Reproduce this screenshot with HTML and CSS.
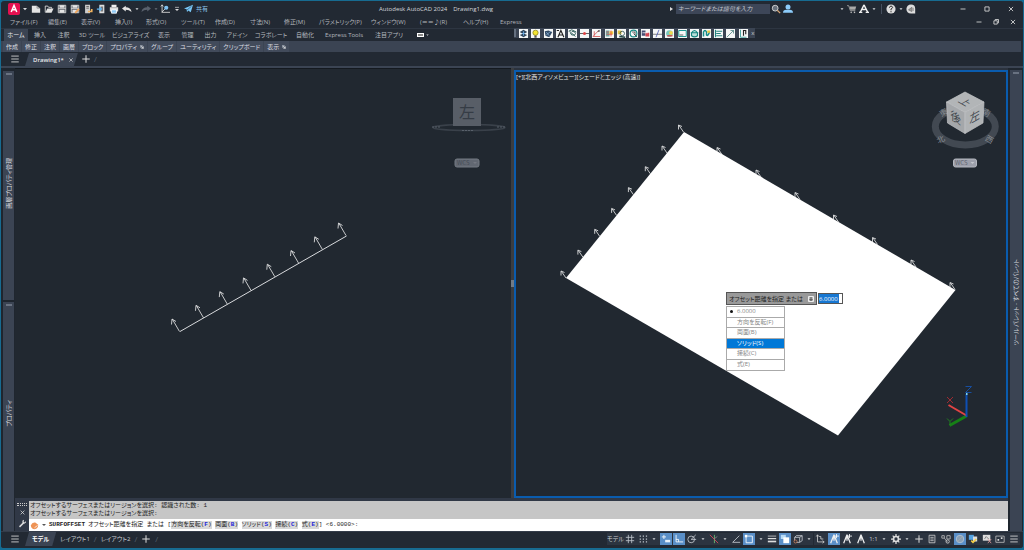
FILE: index.html
```html
<!DOCTYPE html>
<html lang="ja">
<head>
<meta charset="utf-8">
<title>Autodesk AutoCAD 2024 - Drawing1.dwg</title>
<link rel="stylesheet" href="styles.css">
</head>
<body>
<svg class="defs" aria-hidden="true">
  <symbol id="caret" viewBox="0 0 12 12"><path d="M3 4.500h6L6 8z" fill="#d5d8dc"/></symbol>
  <symbol id="corner" viewBox="0 0 6 6"><path d="M0 0h4v4H0z" fill="#8a929e"/><path d="M2 2l3 3M5 2v3H2" stroke="#eee" fill="none"/></symbol>
  <symbol id="new" viewBox="0 0 12 12"><path d="M1 2h6v3h4v5.500H1z" fill="#e4e4e4"/><path d="M7 2l4 3H7z" fill="#aaa"/></symbol>
  <symbol id="open" viewBox="0 0 12 12"><path d="M1.500 10V2.500h3l1 1.500H9v1.500" fill="none" stroke="#e4e4e4"/><path d="M1.500 10.500l2.500-5h7.500l-2.500 5z" fill="#e4e4e4"/></symbol>
  <symbol id="save" viewBox="0 0 12 12"><path d="M1.500 1.500h9v9h-9z" fill="#555b64" stroke="#ddd"/><path d="M3 1.500h6v3H3zM3 7h6v3.500H3z" fill="#e4e4e4"/><path d="M1.500 5.500h9" stroke="#ddd"/></symbol>
  <symbol id="pencil" viewBox="0 0 12 12"><path d="M5.500 10l4.500-5 1.500 1.500-4.500 5z" fill="#f2a65a"/></symbol>
  <symbol id="pagearrow" viewBox="0 0 12 12"><path d="M2.500 1h6v10h-6z" fill="#ccc"/><path d="M4 3h3M4 5h3" stroke="#555"/><path d="M6 9h4.500v-3" fill="none" stroke="#f2b35e" stroke-width="2"/></symbol>
  <symbol id="pageblue" viewBox="0 0 12 12"><path d="M4 1h6v10H4z" fill="#ddd"/><path d="M5.500 3v6h3V3z" fill="#777"/><path d="M1 6h5M4 3.500L6.500 6 4 8.500" stroke="#62b5ef" fill="none" stroke-width="1.500"/></symbol>
  <symbol id="print" viewBox="0 0 12 12"><path d="M3 1h6v3H3z" fill="#eee"/><path d="M1 4h10v5H1z" fill="#ddd"/><path d="M3 7h6v4H3z" fill="#8fc9f5" stroke="#fff"/></symbol>
  <symbol id="undo" viewBox="0 0 12 12"><path d="M0 5.500L4.500 2v2q6 0 7 5.500Q8.500 7 4.500 7v2z" fill="#e4e4e4"/></symbol>
  <symbol id="redo" viewBox="0 0 12 12"><path d="M12 5.500L7.500 2v2q-6 0-7 5.500Q3.500 7 7.500 7v2z" fill="#59616d"/></symbol>
  <symbol id="axis" viewBox="0 0 12 12"><path d="M2.500 1v9H12M1 3l1.500-2L4 3M2 10l5-5" fill="none" stroke="#ddd"/><circle cx="7.500" cy="4.500" r="2.500" fill="#7fc1f2"/></symbol>
  <symbol id="more" viewBox="0 0 12 12"><path d="M3 3.500h6" stroke="#ddd"/><path d="M3 6h6L6 9z" fill="#ddd"/></symbol>
  <symbol id="plane" viewBox="0 0 12 12"><path d="M0 6l12-5-3 10-3.500-2.500L4 11 3.500 7z" fill="#78c5f5"/><path d="M4 8l6-5" stroke="#315c7a"/></symbol>
  <symbol id="search" viewBox="0 0 12 12"><circle cx="5" cy="5" r="3.500" fill="#68717c" stroke="#ddd"/><path d="M7.500 7.500L11 11" stroke="#d7a676" stroke-width="1.500"/></symbol>
  <symbol id="user" viewBox="0 0 12 12"><circle cx="6" cy="3.500" r="3" fill="#8ccbfa"/><path d="M0 10.500q0-3.500 4-3.500h4q4 0 4 3.500z" fill="#8ccbfa"/></symbol>
  <symbol id="cart" viewBox="0 0 12 12"><path d="M0 2h2l2 6h6" stroke="#aaa" fill="none"/><path d="M3 3h8l-1 4H4z" fill="#aaa"/><circle cx="5" cy="10" r="1" fill="#bbb"/><circle cx="9" cy="10" r="1" fill="#bbb"/></symbol>
  <symbol id="store" viewBox="0 0 12 12"><path d="M6 1L1.500 10M6 1l4.500 9M4 6.500h4" stroke="#eee" stroke-width="1.700" fill="none"/><path d="M0 10h4M8 10h4" stroke="#eee" stroke-width="1.500"/></symbol>
  <symbol id="helpdisc" viewBox="0 0 12 12"><circle cx="6" cy="6" r="5.500" fill="#ddd"/><path d="M4 4.500q.5-2 2-2t2 1.500q0 1-2 2V7.500M6 8.500V10" stroke="#333" fill="none" stroke-width="1.200"/></symbol>
  <symbol id="notice" viewBox="0 0 12 12"><path d="M6 .5q5 0 5 5v6H6Q.5 11 .5 6 1 .5 6 .5" fill="#ddd"/><path d="M3 7l4-3v5zM8.500 4.500v4" stroke="#777" fill="#999"/></symbol>
  <symbol id="min" viewBox="0 0 12 12"><path d="M3 6h6" stroke="#ddd"/></symbol>
  <symbol id="max" viewBox="0 0 12 12"><path d="M3.500 3.500h5v5h-5z" stroke="#ddd" fill="none"/></symbol>
  <symbol id="restore" viewBox="0 0 12 12"><path d="M3.500 4.500h4v4h-4zM5 4V3h4v4H8" stroke="#ddd" fill="none"/></symbol>
  <symbol id="close" viewBox="0 0 12 12"><path d="M3.500 3.500l5 5M8.500 3.500l-5 5" stroke="#ddd"/></symbol>
  <symbol id="burger" viewBox="0 0 12 12"><path d="M1.500 2.500h9M1.500 6h9M1.500 9.500h9" stroke="#ddd"/></symbol>
  <symbol id="plus" viewBox="0 0 12 12"><path d="M6 1.500v9M1.500 6h9" stroke="#ddd" stroke-width="1.200"/></symbol>
  <symbol id="wrench" viewBox="0 0 12 12"><path d="M2 10.500l6-6" stroke="#ddd" stroke-width="2"/><path d="M10.500 2.500A2.500 2.500 0 1 1 8 1L7.500 4l1.500.5z" fill="#ddd"/></symbol>
  <symbol id="surf" viewBox="0 0 12 12"><path d="M1 6q2-5 6-4l4 3q0 5-5 6-4 0-5-5" fill="#ee9355"/><path d="M6 9l4-3" stroke="#fff"/></symbol>
  <symbol id="down" viewBox="0 0 6 6"><path d="M.5.500h5v5h-5z" fill="#bbb" stroke="#eee"/><path d="M3 1v3.500M1.500 3L3 4.500 4.500 3" stroke="#222" stroke-width=".7" fill="none"/></symbol>
  <!-- floating toolbar -->
  <symbol id="layer1" viewBox="0 0 12 12"><path d="M1 4l5-3 5 3-5 3zM1 8l5-2 5 2-5 3z" fill="#30465c"/><path d="M6 3v6M4 6h4" stroke="#76b7ef"/></symbol>
  <symbol id="bulb" viewBox="0 0 12 12"><circle cx="6" cy="5" r="3.500" fill="#f3e431" stroke="#88811b"/><path d="M4.500 8.500h3v3h-3z" fill="#555"/></symbol>
  <symbol id="layer2" viewBox="0 0 12 12"><path d="M1 3l5-1 5 2-4 7-5-2z" fill="#304a66"/><path d="M3 8l6-5M3 4l4 5" stroke="#8cb4d9"/></symbol>
  <symbol id="texta" viewBox="0 0 12 12"><path d="M2.500 11L6.500 2 10.500 11M4 8h5M1 2h3" stroke="#222" stroke-width="1.500" fill="none"/></symbol>
  <symbol id="shape1" viewBox="0 0 12 12"><path d="M1 3l4-2 6 3M2 3l8 7M5 3q5 0 5 3T5 8L3 5" fill="none" stroke="#35635f" stroke-width="1.300"/></symbol>
  <symbol id="redline" viewBox="0 0 12 12"><path d="M0 6h12" stroke="#333"/><circle cx="6" cy="6" r="2" fill="#e04545"/></symbol>
  <symbol id="redangle" viewBox="0 0 12 12"><path d="M2 9L9 2M1 10h10M3 3v6" stroke="#c44" fill="none"/><path d="M7 3l3-2v3z" fill="#333"/></symbol>
  <symbol id="hatch" viewBox="0 0 12 12"><path d="M1 2h5v8H1z" fill="#71aaa5"/><path d="M6 3h5v4H6z" fill="#f3d13d"/><path d="M2 4h3M2 7h8M8 2v8" stroke="#d44"/></symbol>
  <symbol id="shape2" viewBox="0 0 12 12"><path d="M1 2h5v5H1z" fill="#e0c64b"/><circle cx="7" cy="6" r="3" fill="none" stroke="#244"/><path d="M3 10L11 11" stroke="#244" stroke-width="2"/></symbol>
  <symbol id="ring" viewBox="0 0 12 12"><circle cx="6" cy="6" r="4.500" fill="none" stroke="#1b8b86" stroke-width="1.500"/><path d="M6 6l5 5M4 4h4v4" stroke="#333" fill="none"/></symbol>
  <symbol id="blocks" viewBox="0 0 12 12"><path d="M1 2h5v7H1z" fill="#464c73"/><path d="M6 5h5v5H6z" fill="#d44552"/><path d="M2 5h7" stroke="#fff"/></symbol>
  <symbol id="trim" viewBox="0 0 12 12"><path d="M0 7h12" stroke="#555"/><path d="M8 1L4 11" stroke="#3d4fb0"/></symbol>
  <symbol id="palette" viewBox="0 0 12 12"><circle cx="6" cy="6" r="4.500" fill="#78c8bd"/><circle cx="8" cy="5" r="2.500" fill="#f1d94c"/><path d="M3 9h7" stroke="#c55" stroke-width="2"/></symbol>
  <symbol id="rect" viewBox="0 0 12 12"><path d="M1 2h10v8H1z" fill="none" stroke="#1b9690" stroke-width="1.300"/><path d="M2 8h5" stroke="#333"/></symbol>
  <symbol id="cyl" viewBox="0 0 12 12"><path d="M1 5h10M2 5q4-6 8 0v4q-4 3-8 0z" stroke="#148581" stroke-width="1.500" fill="#b9deda"/></symbol>
  <symbol id="wave" viewBox="0 0 12 12"><path d="M2 10V4q2-4 4 0v4q2 2 4-4" stroke="#168c87" stroke-width="2" fill="none"/><path d="M7 2h4v3H7z" fill="#e7c83e"/></symbol>
  <symbol id="align" viewBox="0 0 12 12"><path d="M2 1v10M3 3h8M3 6h6M3 9h8" stroke="#23827e" stroke-width="1.500"/></symbol>
  <symbol id="diag" viewBox="0 0 12 12"><path d="M1 11L10 2M6 2h4v4" stroke="#427b79" fill="none"/></symbol>
  <symbol id="note" viewBox="0 0 12 12"><path d="M2 1v10M2 11h8" stroke="#188b86"/><path d="M6 9V2h3v5" stroke="#222" stroke-width="1.500" fill="none"/></symbol>
  <!-- status bar -->
  <symbol id="grid" viewBox="0 0 12 12"><path d="M4 1v10M8 1v10M1 4h10M1 8h10" stroke="#bfc5cc"/></symbol>
  <symbol id="dots" viewBox="0 0 12 12"><path d="M2 2.500h9M2 6h9M2 9.500h9" stroke="#bfc5cc" stroke-width="1.500" stroke-dasharray="1.500 2.200"/></symbol>
  <symbol id="dyn" viewBox="0 0 12 12"><path d="M3.500 1v5M1 3.500h5" stroke="#fff"/><path d="M5 7h6v3H5z" fill="#e8f1fa"/></symbol>
  <symbol id="ortho" viewBox="0 0 12 12"><path d="M2.500 1v8.500H11M2.500 6.500h3v3" stroke="#fff" fill="none"/></symbol>
  <symbol id="polar" viewBox="0 0 12 12"><circle cx="5" cy="6.500" r="4" stroke="#c5cad0" fill="none"/><path d="M5 6.500L10.500 1M5 6.500h6" stroke="#c5cad0"/></symbol>
  <symbol id="iso" viewBox="0 0 12 12"><path d="M6.500 1v10" stroke="#6fc07a"/><path d="M1 1l10 10" stroke="#e04b5a"/><path d="M6 6l4-3" stroke="#888"/></symbol>
  <symbol id="angle" viewBox="0 0 12 12"><path d="M10 2L2 10h9" stroke="#c5cad0" fill="none"/></symbol>
  <symbol id="osnap" viewBox="0 0 12 12"><path d="M2.500 3v7.500H10V2.500H4" stroke="#fff" fill="none"/><path d="M1 1h3v3H1z" fill="#fff"/></symbol>
  <symbol id="weights" viewBox="0 0 12 12"><path d="M1 2.500h10" stroke="#ccc"/><path d="M1 5.500h10" stroke="#ddd" stroke-width="1.500"/><path d="M1 9h10" stroke="#ddd" stroke-width="2"/></symbol>
  <symbol id="cycle" viewBox="0 0 12 12"><path d="M1 1h6v5H1z" fill="#b9dbf5"/><path d="M4 4h7v7H4z" fill="#fff"/></symbol>
  <symbol id="cube" viewBox="0 0 12 12"><path d="M4 2h7v6l-3 2H2V4l2-2M2 4h6v6M8 4l3-2" stroke="#c5cad0" fill="none"/><circle cx="3" cy="9" r="1.800" fill="#25303c" stroke="#c77a55"/></symbol>
  <symbol id="ucs" viewBox="0 0 12 12"><path d="M3 1v8.500h8M1.500 3L3 1l1.500 2M9 8l2 1.500L9 11M5 3h2v3h3" stroke="#ccc" fill="none"/></symbol>
  <symbol id="anno" viewBox="0 0 12 12"><path d="M6 1L2 11M6 1l4 10M6 2v6" stroke="#eee" fill="none" stroke-width="1.500"/></symbol>
  <symbol id="spark" viewBox="0 0 12 12"><path d="M9 0v5M7 2.500h5" stroke="#fff"/></symbol>
  <symbol id="gear" viewBox="0 0 12 12"><circle cx="6" cy="6" r="3" fill="none" stroke="#ddd" stroke-width="2"/><path d="M6 0v2.500M6 9.500V12M0 6h2.500M9.500 6H12M2 2l1.500 1.500M10 2L8.500 3.500M2 10l1.500-1.500M10 10L8.500 8.500" stroke="#ddd" stroke-width="1.500"/></symbol>
  <symbol id="list" viewBox="0 0 12 12"><path d="M2.500 1.500h7v9h-7zM4 4h4M4 6h4M4 8h4" stroke="#ccc" fill="none"/></symbol>
  <symbol id="links" viewBox="0 0 12 12"><path d="M1 2h3v3H1zM7 2h4v4H7z" stroke="#bbb" fill="none"/><path d="M4 5l4 5" stroke="#bbb"/><circle cx="8" cy="9" r="2" stroke="#ccc" fill="none"/></symbol>
  <symbol id="isolate" viewBox="0 0 12 12"><circle cx="6" cy="6" r="4.500" fill="#8aa0b6" stroke="#b7c6d5"/><path d="M3 9l6-6" stroke="#aaa"/></symbol>
  <symbol id="perf" viewBox="0 0 12 12"><path d="M1 1h6v6H1z" fill="#54a3e2"/><path d="M6 3h5v6H6z" fill="#ddd"/><path d="M4 8l2 2 4-4" stroke="#f1cc44" stroke-width="2" fill="none"/></symbol>
  <symbol id="image" viewBox="0 0 12 12"><path d="M1 1h9v7H1z" fill="#ddd"/><path d="M3 6l2-3 3 3" stroke="#777" fill="none"/><path d="M7 6l4 5M11 6l-4 5" stroke="#e2a0a0"/></symbol>
  <symbol id="screen" viewBox="0 0 12 12"><path d="M1 2.500h10v7.500H1z" stroke="#bbb" fill="none"/><path d="M3 6h2v2H3zM7 4h2v2H7z" fill="#ddd"/></symbol>
  <symbol id="arrow" viewBox="0 0 12 16" overflow="visible"><path d="M8 12.500L1 .5M0 5.500L.5 0 4.500 2.500" stroke="#f1f1f1" fill="none" stroke-width=".8"/></symbol>
  <symbol id="arrow-s" viewBox="0 0 12 12" overflow="visible"><path d="M5 7L.5 .5M0 4.500V0L3.500 1.500" stroke="#f1f1f1" fill="none" stroke-width=".8"/></symbol>
</svg>

<div class="window">
  <header class="titlebar">
    <div class="quick">
      <button class="logo" aria-label="アプリケーション メニュー"><svg viewBox="0 0 12 12"><path d="M3.200 9L6 2.500 8.800 9M4 6.800h4" stroke="#fff" stroke-width="1.500" fill="none"/></svg></button>
      <button class="icon" aria-label="メニューを開く"><svg><use href="#caret"/></svg></button>
      <div class="quick-tools">
        <button class="icon" aria-label="新規"><svg><use href="#new"/></svg></button>
        <button class="icon" aria-label="開く"><svg><use href="#open"/></svg></button>
        <button class="icon" aria-label="保存"><svg><use href="#save"/></svg></button>
        <button class="icon" aria-label="名前を付けて保存"><svg><use href="#save"/><use href="#pencil"/></svg></button>
        <button class="icon" aria-label="Web から開く"><svg><use href="#pagearrow"/></svg></button>
        <button class="icon" aria-label="Web に保存"><svg><use href="#pageblue"/></svg></button>
        <button class="icon" aria-label="印刷"><svg><use href="#print"/></svg></button>
        <button class="icon" aria-label="元に戻す"><svg><use href="#undo"/></svg></button>
      </div>
      <button class="caret" aria-label="元に戻す履歴"><svg><use href="#caret"/></svg></button>
      <button class="icon" aria-label="やり直し"><svg><use href="#redo"/></svg></button>
      <button class="caret dim" aria-label="やり直し履歴"><svg><use href="#caret"/></svg></button>
      <button class="icon" aria-label="UCS"><svg><use href="#axis"/></svg></button>
      <button class="caret more" aria-label="カスタマイズ"><svg><use href="#more"/></svg></button>
      <button class="share"><svg><use href="#plane"/></svg>共有</button>
    </div>
    <div class="title"><span>Autodesk AutoCAD 2024</span><span>Drawing1.dwg</span></div>
    <div class="infocenter">
      <button class="next" aria-label="検索を折りたたむ"><svg viewBox="0 0 4 6"><path d="M0 1l3 2-3 2z" fill="#ddd"/></svg></button>
      <input class="search" type="text" aria-label="検索" placeholder="キーワードまたは語句を入力">
      <button class="icon" aria-label="検索実行"><svg><use href="#search"/></svg></button>
      <button class="icon" aria-label="サインイン"><svg><use href="#user"/></svg></button>
      <button class="caret account" aria-label="アカウント"><svg><use href="#caret"/></svg></button>
      <button class="icon" aria-label="カート"><svg><use href="#cart"/></svg></button>
      <button class="icon" aria-label="App Store"><svg><use href="#store"/></svg></button>
      <button class="caret" aria-label="App Store メニュー"><svg><use href="#caret"/></svg></button>
      <i class="rule"></i>
      <button class="icon" aria-label="ヘルプ"><svg><use href="#helpdisc"/></svg></button>
      <button class="caret" aria-label="ヘルプ メニュー"><svg><use href="#caret"/></svg></button>
      <button class="icon" aria-label="通知"><svg><use href="#notice"/></svg></button>
      <div class="sys">
        <button class="icon" aria-label="最小化"><svg><use href="#min"/></svg></button>
        <button class="icon" aria-label="最大化"><svg><use href="#max"/></svg></button>
        <button class="icon" aria-label="閉じる"><svg><use href="#close"/></svg></button>
      </div>
    </div>
  </header>

  <nav class="menubar">
    <div class="menus">
      <button>ファイル(F)</button><button>編集(E)</button><button>表示(V)</button><button>挿入(I)</button><button>形式(O)</button><button>ツール(T)</button><button>作成(D)</button><button>寸法(N)</button><button>修正(M)</button><button>パラメトリック(P)</button><button>ウィンドウ(W)</button><button>(＝＝♪(R)</button><button>ヘルプ(H)</button><button>Express</button>
    </div>
    <div class="doc-sys">
      <button class="icon" aria-label="図面を最小化"><svg><use href="#min"/></svg></button>
      <button class="icon" aria-label="図面を元に戻す"><svg><use href="#restore"/></svg></button>
      <button class="icon" aria-label="図面を閉じる"><svg><use href="#close"/></svg></button>
    </div>
  </nav>

  <nav class="ribbon-tabs">
    <button class="active">ホーム</button><button>挿入</button><button>注釈</button><button>3D ツール</button><button>ビジュアライズ</button><button>表示</button><button>管理</button><button>出力</button><button>アドイン</button><button>コラボレート</button><button>自動化</button><button>Express Tools</button><button>注目アプリ</button>
    <button class="ribbon-toggle" aria-label="リボンを最小化"><i></i><svg><use href="#caret"/></svg></button>
  </nav>

  <div class="panels">
    <button>作成</button><button>修正</button><button>注釈</button><button>画層</button><button>ブロック</button><button>プロパティ<svg><use href="#corner"/></svg></button><button>グループ</button><button>ユーティリティ</button><button>クリップボード</button><button>表示<svg><use href="#corner"/></svg></button>
  </div>

  <div class="toolbar">
    <i class="grip"></i>
    <button aria-label="画層プロパティ"><svg><use href="#layer1"/></svg></button><button aria-label="表示"><svg><use href="#bulb"/></svg></button><button aria-label="画層"><svg><use href="#layer2"/></svg></button><button aria-label="文字"><svg><use href="#texta"/></svg></button><button aria-label="スプライン"><svg><use href="#shape1"/></svg></button><button aria-label="点"><svg><use href="#redline"/></svg></button><button aria-label="計測"><svg><use href="#redangle"/></svg></button><button aria-label="ハッチング"><svg><use href="#hatch"/></svg></button><button aria-label="結合"><svg><use href="#shape2"/></svg></button><button aria-label="円"><svg><use href="#ring"/></svg></button><button aria-label="ブロック"><svg><use href="#blocks"/></svg></button><button aria-label="トリム"><svg><use href="#trim"/></svg></button><button aria-label="色"><svg><use href="#palette"/></svg></button><button aria-label="長方形"><svg><use href="#rect"/></svg></button><button aria-label="円柱"><svg><use href="#cyl"/></svg></button><button aria-label="サーフェス"><svg><use href="#wave"/></svg></button><button aria-label="位置合わせ"><svg><use href="#align"/></svg></button><button aria-label="線分"><svg><use href="#diag"/></svg></button><button aria-label="注記"><svg><use href="#note"/></svg></button>
    <button class="toolbar-close" aria-label="ツールバーを閉じる">x</button>
  </div>

  <nav class="file-tabs">
    <button class="burger" aria-label="図面タブ メニュー"><svg><use href="#burger"/></svg></button>
    <button class="file-tab">Drawing1*<svg><use href="#close"/></svg></button>
    <button class="icon add" aria-label="新しい図面"><svg><use href="#plus"/></svg></button>
    <span class="slash">/</span>
  </nav>

  <main class="workspace">
    <aside class="side left">
      <section class="palette"><i></i><span>画層プロパティ管理</span></section>
      <section class="palette lower"><i></i><span>プロパティ</span></section>
    </aside>
    <div class="center">
      <div class="views">
        <section class="view" aria-label="左ビュー">
          <svg class="drawing"><g transform="translate(-15 -69)">
            <path d="M180 331.500L346.500 236" stroke="#d8dadd" fill="none"/>
            <use href="#arrow" x="171.500" y="319" width="12" height="16"/><use href="#arrow" x="195.500" y="305.300" width="12" height="16"/><use href="#arrow" x="219.300" y="291.600" width="12" height="16"/><use href="#arrow" x="243" y="277.900" width="12" height="16"/><use href="#arrow" x="266.800" y="264.200" width="12" height="16"/><use href="#arrow" x="290.500" y="250.500" width="12" height="16"/><use href="#arrow" x="314.300" y="236.800" width="12" height="16"/><use href="#arrow" x="338" y="223" width="12" height="16"/>
            <ellipse cx="469" cy="127.500" rx="36" ry="3" fill="none" stroke="#3a414a" stroke-width="1.500"/>
            <path d="M432 127h8M497 127h8M462 130.500h12" stroke="#59616b" stroke-dasharray="2 1"/>
            <path d="M453 98h28v28h-28z" fill="#585e67"/>
            <text class="cube-left" x="467" y="118">左</text>
            <rect x="455" y="159" width="24" height="8" rx="2" fill="#626872" stroke="#747a83"/>
            <text class="wcs dark" x="457" y="165">WCS</text><path d="M473 162h4l-2 2z" fill="#747982"/>
          </g></svg>
        </section>
        <div class="splitter"><i></i></div>
        <section class="view active" aria-label="北西アイソメビュー">
          <svg class="drawing"><g transform="translate(-516 -72)">
            <path d="M566 278L684 132 955.500 290 838 435.500z" fill="#fff"/>
            <use href="#arrow-s" x="561" y="271" width="12" height="12"/><use href="#arrow-s" x="577.900" y="250.100" width="12" height="12"/><use href="#arrow-s" x="594.700" y="229.300" width="12" height="12"/><use href="#arrow-s" x="611.600" y="208.400" width="12" height="12"/><use href="#arrow-s" x="628.400" y="187.600" width="12" height="12"/><use href="#arrow-s" x="645.300" y="166.700" width="12" height="12"/><use href="#arrow-s" x="662" y="146" width="12" height="12"/><use href="#arrow-s" x="678.500" y="125" width="12" height="12"/>
            <use href="#arrow-s" x="717" y="147.500" width="12" height="12"/><use href="#arrow-s" x="756" y="170" width="12" height="12"/><use href="#arrow-s" x="795" y="192.500" width="12" height="12"/><use href="#arrow-s" x="833.500" y="215" width="12" height="12"/><use href="#arrow-s" x="872.500" y="237.500" width="12" height="12"/><use href="#arrow-s" x="911" y="260" width="12" height="12"/><use href="#arrow-s" x="950" y="282.500" width="12" height="12"/>
            <ellipse cx="965.300" cy="126.500" rx="30" ry="18.500" fill="none" stroke="#424952" stroke-width="7"/>
            <g class="compass"><text transform="translate(942 142) rotate(-25)">北</text><text transform="translate(988 142) rotate(30)">西</text><text transform="translate(945 115) rotate(-30)">東</text><text transform="translate(985 115) rotate(30)">南</text></g>
            <path d="M965 92l19 10-19 10.500L946.500 102z" fill="#b2b5b7" stroke="#c6c8ca" stroke-width=".7"/>
            <path d="M946.500 102l18.500 10.500v21L947.500 123z" fill="#a4a7aa" stroke="#c0c2c4" stroke-width=".7"/>
            <path d="M984 102l-19 10.500v21L983 123z" fill="#b0b3b5" stroke="#c0c2c4" stroke-width=".7"/>
            <g class="cube-text"><text class="top" transform="matrix(.87 .5 -.87 .5 957.500 101.500)">上</text><text transform="matrix(.87 .5 0 1 950.500 119)">後</text><text transform="matrix(.87 -.5 0 1 969.500 124)">左</text></g>
            <rect x="953.500" y="159" width="23" height="8" rx="2" fill="#9da0ab" stroke="#b5b8c0"/>
            <text class="wcs" x="955" y="165">WCS</text><path d="M970.500 162h4l-2 2z" fill="#c4c7cd"/>
            <path d="M966.500 416L949.500 425.500" stroke="#168016" stroke-width="3"/><path d="M966.500 415.500L948.500 405" stroke="#e24444" stroke-width="2"/><path d="M966.500 417V394" stroke="#0e4fb4" stroke-width="2"/>
            <path d="M966 394h1.500" stroke="#7ed6ee" stroke-width="2"/>
            <path d="M947 397l6 6M953 397l-6 6" stroke="#9e2b32"/><path d="M947 418.500l3 3 3-3M950 421.500v3.500" stroke="#218121" fill="none"/><path d="M965.500 386.500h6l-6 6h6" stroke="#174ea0" fill="none"/>
          </g></svg>
          <div class="view-label">[+][北西アイソメビュー][シェードとエッジ (高速)]</div>
          <form class="dynamic">
            <div class="prompt-row">
              <label for="distance">オフセット距離を指定 または<svg><use href="#down"/></svg></label>
              <input id="distance" type="text" value="6.0000">
            </div>
            <div class="options">
              <button type="button" class="current">6.0000</button><button type="button">方向を反転(F)</button><button type="button">両面(B)</button><button type="button" class="chosen">ソリッド(S)</button><button type="button">接続(C)</button><button type="button">式(E)</button>
            </div>
          </form>
        </section>
      </div>
      <section class="command">
        <div class="command-tools">
          <i class="dots"></i>
          <button aria-label="コマンド ウィンドウを閉じる"><svg><use href="#close"/></svg></button>
          <button aria-label="カスタマイズ"><svg><use href="#wrench"/></svg></button>
        </div>
        <div class="console">
          <div class="history"><p>オフセットするサーフェスまたはリージョンを選択: 認識された数: 1</p><p>オフセットするサーフェスまたはリージョンを選択:</p></div>
          <div class="entry"><svg class="surf"><use href="#surf"/></svg><span class="tri"></span><b>SURFOFFSET</b><span>オフセット距離を指定 または [<button>方向を反転(<em>F</em>)</button> <button>両面(<em>B</em>)</button> <button>ソリッド(<em>S</em>)</button> <button>接続(<em>C</em>)</button> <button>式(<em>E</em>)</button>] &lt;6.0000&gt;:</span></div>
        </div>
      </section>
    </div>
    <aside class="side right"><section class="palette"><i></i><span>ツール パレット - すべてのパレット</span></section></aside>
  </main>

  <footer class="status">
    <nav class="layouts">
      <button class="burger" aria-label="レイアウト メニュー"><svg><use href="#burger"/></svg></button>
      <button class="layout-tab active">モデル</button><button class="layout-tab">レイアウト1</button><span class="slash">/</span><button class="layout-tab">レイアウト2</button><span class="slash">/</span>
      <button class="icon add" aria-label="新しいレイアウト"><svg><use href="#plus"/></svg></button><span class="slash">/</span>
    </nav>
    <div class="toggles">
      <div class="toggle-group">
        <button class="model">モデル</button>
        <button class="icon" aria-label="グリッド"><svg><use href="#grid"/></svg></button><button class="icon" aria-label="スナップ"><svg><use href="#dots"/></svg></button><button class="caret" aria-label="スナップ設定"><svg><use href="#caret"/></svg></button><button class="icon on" aria-label="ダイナミック入力"><svg><use href="#dyn"/></svg></button><button class="icon on" aria-label="直交モード"><svg><use href="#ortho"/></svg></button><button class="icon" aria-label="極トラッキング"><svg><use href="#polar"/></svg></button><button class="caret" aria-label="極設定"><svg><use href="#caret"/></svg></button><button class="icon" aria-label="アイソメ"><svg><use href="#iso"/></svg></button><button class="caret" aria-label="アイソメ設定"><svg><use href="#caret"/></svg></button><button class="icon" aria-label="トラッキング"><svg><use href="#angle"/></svg></button><button class="icon on" aria-label="オブジェクト スナップ"><svg><use href="#osnap"/></svg></button><button class="caret" aria-label="スナップ一覧"><svg><use href="#caret"/></svg></button><button class="icon" aria-label="線の太さ"><svg><use href="#weights"/></svg></button><button class="icon on" aria-label="選択の循環"><svg><use href="#cycle"/></svg></button><button class="icon" aria-label="3D スナップ"><svg><use href="#cube"/></svg></button><button class="caret" aria-label="3D スナップ設定"><svg><use href="#caret"/></svg></button>
      </div>
      <div class="toggle-group">
        <button class="icon" aria-label="ダイナミック UCS"><svg><use href="#ucs"/></svg></button><button class="icon on" aria-label="注釈の表示"><svg><use href="#anno"/><use href="#spark"/></svg></button><button class="icon" aria-label="自動尺度"><svg><use href="#anno"/><use href="#spark"/></svg></button><button class="icon" aria-label="注釈尺度"><svg><use href="#anno"/></svg></button><button class="scale">1:1</button><button class="caret" aria-label="尺度一覧"><svg><use href="#caret"/></svg></button><button class="icon" aria-label="ワークスペース"><svg><use href="#gear"/></svg></button><button class="caret" aria-label="ワークスペース一覧"><svg><use href="#caret"/></svg></button><button class="icon" aria-label="注釈モニター"><svg><use href="#plus"/></svg></button><button class="icon" aria-label="クイック プロパティ"><svg><use href="#list"/></svg></button><button class="icon" aria-label="UI ロック"><svg><use href="#links"/></svg></button><button class="icon on" aria-label="選択表示"><svg><use href="#isolate"/></svg></button><button class="icon" aria-label="パフォーマンス"><svg><use href="#perf"/></svg></button><button class="icon" aria-label="画像"><svg><use href="#image"/></svg></button><button class="icon" aria-label="フルスクリーン"><svg><use href="#screen"/></svg></button><button class="icon" aria-label="ステータス メニュー"><svg><use href="#burger"/></svg></button>
      </div>
    </div>
  </footer>
</div>
</body>
</html>
```

FILE: styles.css
```css
:root {
  --bg: #222933;
  --canvas: #212830;
  --bar: #3b4453;
  --text: #c9cdd2;
  --accent: #0a5cae;
}
* { box-sizing: border-box; }
body {
  margin: 0;
  background: #0d6f9c;
  color: var(--text);
  font: 7px/10px "Open Sans", "Noto Sans CJK JP", sans-serif;
  font-feature-settings: "palt";
}
button, input { font: inherit; font-feature-settings: inherit; color: inherit; }
button { padding: 0; border: 0; background: none; white-space: nowrap; }
i, em { font-style: normal; }
svg { display: block; }
.defs { position: absolute; width: 0; height: 0; }
.window {
  position: relative;
  display: flex;
  flex-direction: column;
  min-height: 100vh;
  border: 1px solid #176b91;
  border-bottom-width: 2px;
  border-radius: 4px;
  background: var(--bg);
  overflow: hidden;
}
.icon { flex: none; width: 12px; height: 12px; padding: 1px; }
.icon svg { width: 10px; height: 10px; }
.caret { flex: none; width: 8px; height: 12px; padding: 3px 1px; }
.caret svg { width: 6px; height: 6px; }
.dim { opacity: .4; }

.titlebar { display: grid; grid-template-columns: 378px auto 1fr; height: 15px; align-items: center; }
.quick { display: flex; align-items: center; padding-left: 7px; }
.logo { width: 12px; height: 12px; border-radius: 2px; background: #e51050; }
.logo svg { width: 12px; height: 12px; }
.logo + .icon { width: 10px; padding: 2px 1px; }
.logo + .icon svg { width: 8px; height: 8px; }
.quick-tools { display: flex; justify-content: space-between; width: 103px; }
.quick > .caret { width: 7px; }
.quick .more { width: 12px; padding: 2px; }
.quick .more svg { width: 8px; height: 8px; }
.share { display: flex; align-items: center; gap: 3px; margin-left: 1px; color: #8fc6ea; font-size: 6px; }
.share svg { width: 9px; height: 9px; }
.title { display: flex; gap: 6px; color: #d4d7db; font-size: 6px; white-space: nowrap; }
.infocenter { display: flex; align-items: center; justify-content: flex-end; }
.next { width: 6px; }
.next svg { width: 4px; height: 6px; }
.search { width: 94px; height: 10px; padding: 0 2px; border: 0; background: #3d4658; font-size: 6px; font-style: italic; }
.search::placeholder { color: #c5c9d0; opacity: 1; }
.account { margin-left: 44px; }
.rule { width: 1px; height: 10px; margin: 0 3px; background: #46505f; }
.sys { display: flex; gap: 12px; margin: 0 6px 0 40px; }

.menubar { display: flex; justify-content: space-between; height: 13px; align-items: center; border-bottom: 1px solid #2d3541; }
.menus {
  display: grid;
  grid-template-columns: 38px 33px 34px 31px 35px 34px 35px 34px 35px 52px 49px 43px 37px 30px;
  padding-left: 9px;
}
.menus button { text-align: left; color: #b2b6bc; font-size: 6px; }
.doc-sys { display: flex; gap: 5px; margin-right: 4px; }
.ribbon-tabs {
  display: grid;
  grid-template-columns: 24px 24px 23px 34px 43px 24px 23px 23px 30px 38px 30px 48px 42px 20px;
  height: 12px;
  padding-left: 3px;
}
.ribbon-tabs button { color: #b5b9bf; font-size: 6px; text-align: center; }
.ribbon-tabs .active { background: var(--bar); color: #e7e9eb; }
.ribbon-toggle { display: flex; align-items: center; gap: 1px; padding-left: 7px; }
.ribbon-toggle i { width: 8px; height: 4px; border: 1px solid #fff; background: #888; }
.ribbon-toggle svg { width: 6px; height: 6px; }
.panels { display: flex; gap: 1px; height: 11px; margin-right: 2px; padding-left: 2px; background: var(--bar); }
.panels button { display: flex; align-items: center; gap: 3px; padding: 0 3px; background: #424b5b; color: #dadde1; font-size: 6px; }
.panels svg { width: 4px; height: 4px; }
.toolbar {
  position: absolute;
  left: 513px;
  top: 27px;
  display: flex;
  align-items: center;
  justify-content: space-between;
  width: 241px;
  height: 10px;
  background: #3b4453;
}
.grip { width: 2px; height: 8px; background: #657080; }
.toolbar button { width: 9px; height: 9px; background: #f5f7f7; }
.toolbar button svg { width: 9px; height: 9px; }
.toolbar .toolbar-close { width: 4px; background: none; font-size: 6px; line-height: 4px; }

.file-tabs { display: flex; align-items: stretch; height: 16px; padding-left: 8px; border-bottom: 2px solid var(--bar); }
.burger { width: 12px; }
.burger svg { width: 10px; height: 10px; margin: auto; }
.file-tab {
  display: flex;
  align-items: center;
  gap: 3px;
  margin: 1px 0 0 4px;
  padding: 0 3px 0 8px;
  background: var(--bar);
  color: #e8eaec;
  font-size: 6px;
  font-weight: 600;
  clip-path: polygon(4px 0, 100% 0, calc(100% - 4px) 100%, 0 100%);
}
.file-tab svg { width: 8px; height: 8px; }
.add { align-self: center; margin: 0 3px; }
.file-tabs .add { margin: 0 2px; }
.slash { align-self: center; color: #55606f; font-size: 8px; }

.workspace { flex: 1; display: flex; min-height: 0; background: #2b323d; }
.side { display: flex; flex-direction: column; flex: none; gap: 2px; padding-top: 3px; background: #1f262f; }
.left { width: 14px; padding-left: 2px; padding-right: 1px; }
.right { width: 15px; padding: 2px 1px 0 2px; }
.palette {
  flex: 1;
  display: flex;
  flex-direction: column;
  align-items: center;
  gap: 83px;
  padding-top: 2px;
  background: var(--bar);
}
.palette i { flex: none; width: 6px; height: 2px; background: #697281; }
.palette span {
  writing-mode: vertical-rl;
  text-orientation: sideways;
  transform: rotate(180deg);
  color: #d7dadf;
  font-size: 6px;
  white-space: nowrap;
}
.palette.lower { gap: 94px; }
.right .palette { gap: 185px; }
.center { flex: 1; display: flex; flex-direction: column; min-width: 0; }
.views { flex: 1; display: grid; grid-template-columns: 496fr 3px 494fr; }
.view { position: relative; min-width: 0; background: var(--canvas); border-top: 1px solid #14191f; }
.view.active { margin-top: 2px; border: 2px solid var(--accent); }
.splitter { display: flex; align-items: center; background: #3b3d40; }
.splitter i { width: 3px; height: 7px; background: #737b84; }
.drawing { position: absolute; inset: 0; width: 100%; height: 100%; }
.drawing text { font-family: "Noto Sans CJK JP", sans-serif; }
.cube-left { font-size: 16px; fill: #353c45; text-anchor: middle; }
.cube-text { font-size: 12px; fill: #42484e; }
.cube-text .top { font-size: 10px; }
.compass { font-size: 8px; fill: #858a90; text-anchor: middle; }
.wcs { font-size: 6px; fill: #5f6470; }
.wcs.dark { fill: #464d57; }
.view-label { position: absolute; left: 0; top: 0; color: #e1e3e5; font-size: 6px; }
.dynamic { position: absolute; left: 210px; top: 220px; color: #222; font-size: 6px; }
.prompt-row { display: flex; gap: 1px; align-items: center; }
.prompt-row label {
  display: flex;
  align-items: center;
  justify-content: space-between;
  width: 91px;
  height: 13px;
  padding: 0 2px;
  border: 1px solid #555;
  background: #999;
  white-space: nowrap;
}
.prompt-row label svg { width: 6px; height: 6px; }
.prompt-row input {
  width: 25px;
  height: 11px;
  padding: 0;
  border: 1px solid #555;
  background: linear-gradient(#1777d2, #1777d2) no-repeat 0 0 / 20px 100% #fff;
  color: #fff;
}
.options { display: grid; grid-auto-rows: 1fr; width: 59px; height: 65px; margin-top: 1px; border: 1px solid #aaa; }
.options button { position: relative; padding-left: 10px; border-bottom: 1px solid #aaa; background: #fff; color: #858585; text-align: left; line-height: 9px; }
.options button:last-child { border-bottom: 0; }
.options .chosen { background: #0078d7; color: #fff; }
.options .current::before { content: ""; position: absolute; left: 3px; top: 3px; width: 3px; height: 3px; border-radius: 2px; background: #111; }

.command { display: flex; padding-top: 3px; background: #303846; }
.command-tools { display: flex; flex-direction: column; align-items: center; gap: 2px; width: 14px; padding-top: 2px; }
.command-tools .dots { width: 10px; height: 3px; border-top: 1px dotted #ccc; border-bottom: 1px dotted #ccc; }
.command-tools svg { width: 9px; height: 9px; }
.console { flex: 1; color: #222; font-family: "Liberation Mono", "Noto Sans CJK JP", monospace; font-size: 6px; line-height: 8px; white-space: nowrap; }
.history { padding: 1px; background: #c6c6c6; }
.history p { margin: 0; }
.entry { display: flex; align-items: center; gap: 3px; height: 12px; padding-left: 1px; background: #fff; }
.surf { width: 9px; height: 9px; }
.tri { border: 2px solid transparent; border-top-color: #555; border-bottom: 0; }
.entry button { background: #d8d8d8; }
.entry em { color: #2525d8; font-weight: bold; }

.status { display: flex; justify-content: space-between; height: 17px; padding: 0 3px 0 8px; border-top: 1px solid #343c49; }
.layouts { display: flex; margin-bottom: 2px; }
.layout-tab { padding: 0 4px; font-size: 6px; }
.layout-tab.active { margin-left: 4px; padding: 0 7px; background: var(--bar); color: #fff; font-weight: 600; clip-path: polygon(4px 0, 100% 0, calc(100% - 4px) 100%, 0 100%); }
.toggles { display: flex; gap: 1px; align-items: center; padding-bottom: 2px; }
.toggle-group { display: flex; justify-content: space-between; width: 206px; background: #2c3440; }
.toggle-group .icon.on { background: #5a8fc8; }
.model { width: 16px; font-size: 6px; }
.scale { width: 10px; font-size: 6px; }
```
